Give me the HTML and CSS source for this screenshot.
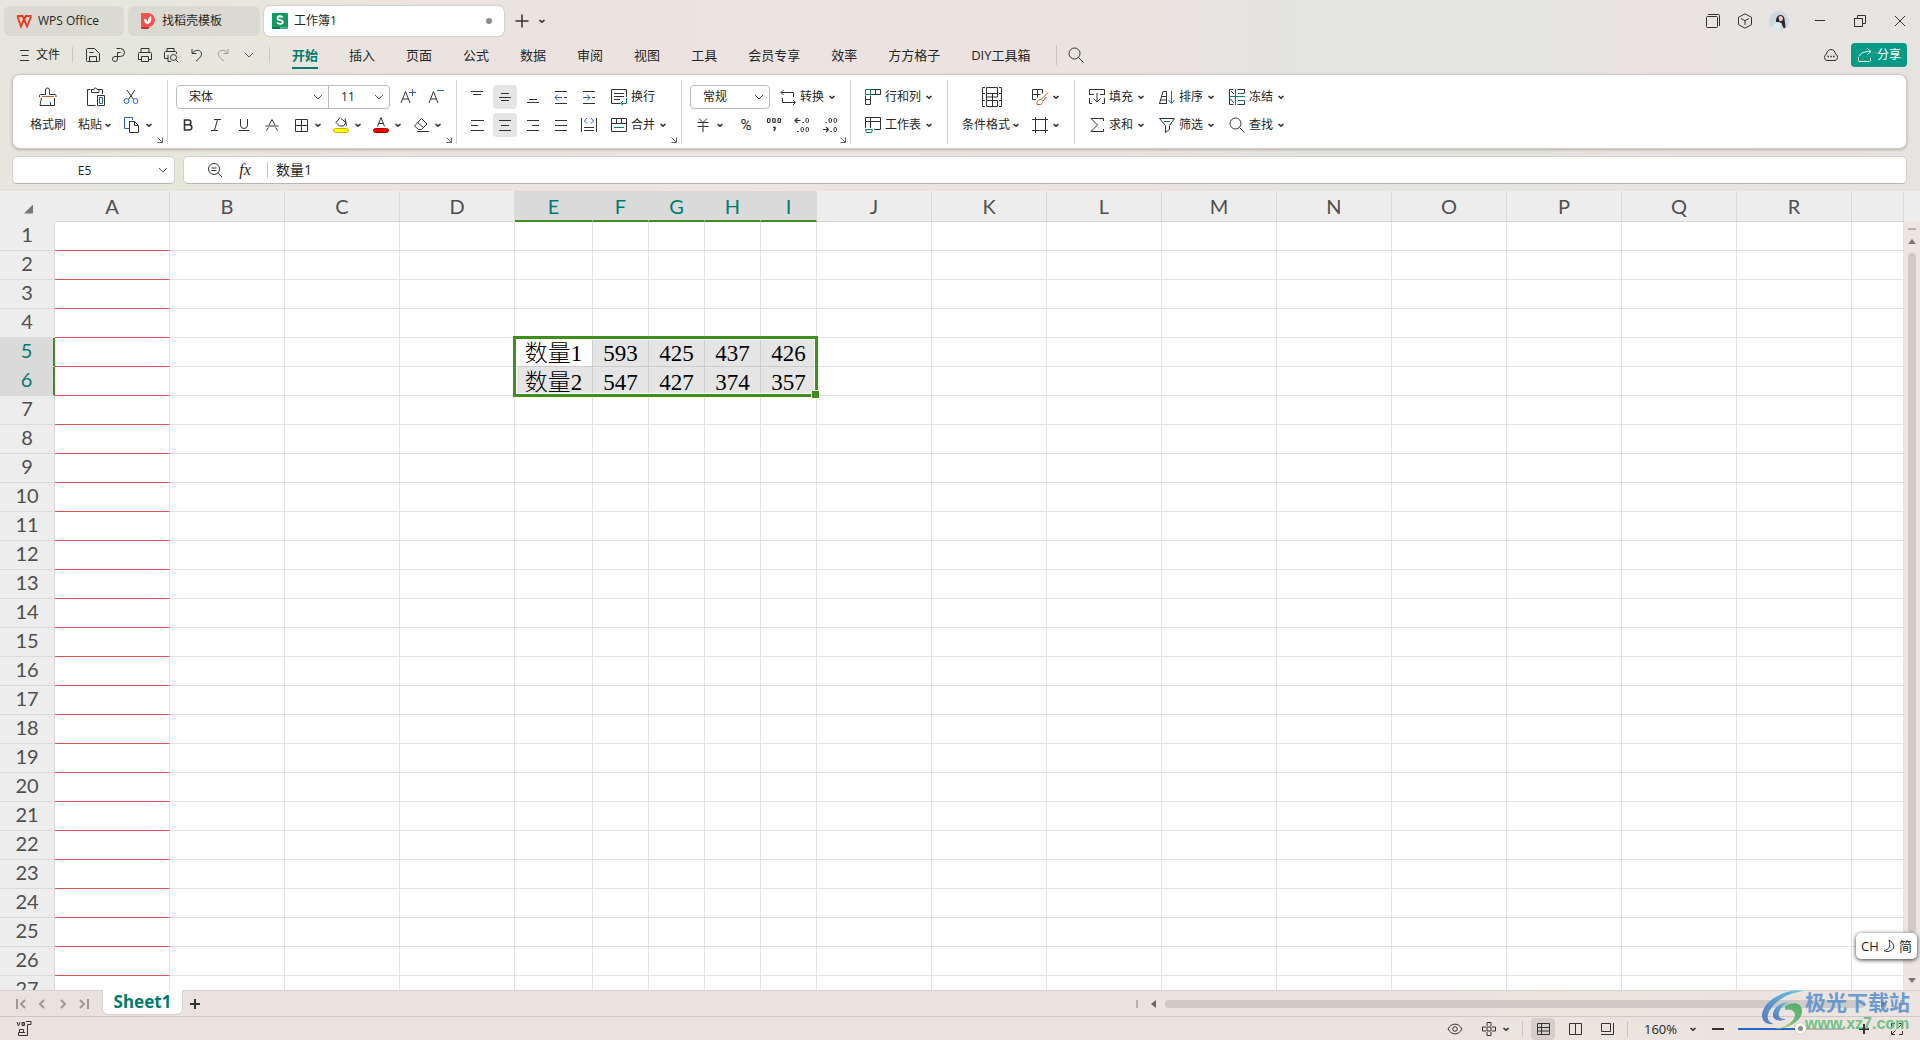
FILE: index.html
```html
<!DOCTYPE html>
<html lang="zh-CN">
<head>
<meta charset="utf-8">
<title>工作簿1 - WPS Office</title>
<link rel="stylesheet" href="styles.css">
</head>
<body>
<svg class="defs" aria-hidden="true">
  <symbol id="chev" viewBox="0 0 10 10"><path d="M2.500 4L5 6.200L7.500 4" fill="none" stroke="#333" stroke-width="1.600"/></symbol>
  <symbol id="chev-thin" viewBox="0 0 10 10"><path d="M1 3l4 4 4-4" fill="none" stroke="#555"/></symbol>
  <symbol id="launch" viewBox="0 0 8 8"><path d="M1.500 1.500l5 5M6.500 1.500v5h-5" fill="none" stroke="#666"/></symbol>
  <symbol id="lens" viewBox="0 0 16 16"><circle cx="6.500" cy="6.500" r="5.500"/><path d="M10.500 10.500l5 5"/></symbol>
</svg>

<header class="titlebar">
  <nav class="doc-tabs">
    <button class="doc-tab home"><svg class="i" viewBox="0 0 16 16"><path d="M1 3h5.500L9 9.500M15.500 3H10L7.500 9.500M1.500 3.500L5 13.500 8 5.500 11 13.500 15 3.500" style="stroke:#f5381f;stroke-width:1.800"/></svg>WPS Office</button>
    <button class="doc-tab docer"><svg class="i" viewBox="0 0 16 16"><path d="M1 0h7a7 7 0 0 1 0 14H1z" fill="#ef5350" stroke="none"/><path d="M1 14h9l-2 2H2.500A1.500 1.500 0 0 1 1 14z" fill="#c62f3a" stroke="none"/><path d="M8 11C4 11 4 7 4.500 5.500 7 6.500 8 8.500 8 11zM8 11c-.5-4 .5-7 3-8 .8 3.500 0 7-3 8z" fill="#fff" stroke="none"/></svg>找稻壳模板</button>
    <button class="doc-tab current"><svg class="i" viewBox="0 0 16 16"><rect width="16" height="16" rx="1" fill="#0f9b63" stroke="none"/><path d="M0 14h16v1a1 1 0 0 1-1 1H1a1 1 0 0 1-1-1z" fill="#087a4b" stroke="none"/><path d="M8 14h8v2H8z" fill="#3bb585" stroke="none"/><path d="M10.800 4.500C9.500 2.800 5.500 2.800 5.500 5.200c0 2.600 5.300 1.300 5.300 3.800 0 2.400-4.300 2.300-5.800.5" style="stroke:#fff;stroke-width:1.900"/></svg>工作簿1<span class="unsaved"></span></button>
    <button class="plain new-tab" aria-label="新建"><svg class="i" viewBox="0 0 16 16"><path d="M8 1.500v13M1.500 8h13" stroke-width="1.500"/></svg></button>
    <button class="plain" aria-label="标签列表"><svg class="c"><use href="#chev"/></svg></button>
  </nav>
  <div class="window-tools">
    <button class="plain" aria-label="窗口"><svg class="i" viewBox="0 0 16 16"><rect x="1.500" y="3.500" width="11" height="11" rx="1"/><path d="M3 1.500h10.500a1 1 0 0 1 1 1V13"/></svg></button>
    <button class="plain" aria-label="应用"><svg class="i" viewBox="0 0 16 16"><path d="M8 .8l6.500 3.500v7.400L8 15.200 1.500 11.700V4.300zM4 5.500l4 2.200 4-2.200M8 7.700V12"/></svg></button>
    <button class="avatar" aria-label="账户"><svg viewBox="0 0 20 20"><circle cx="10" cy="10" r="10" fill="#cbd8de"/><path d="M7 9C8 2 15 3 15.500 8l1 8c-1 2-2 1-2.500 0l-1.500-4L7 11z" fill="#2b2533"/><path d="M9.500 6c2-2 4.500-.5 4.500 1.500S12 11 10.500 10z" fill="#efc9bd"/><path d="M3 18c0-4 3-7 7-7l2 2-1 7c-3 0-6 0-8-2z" fill="#dce9ec"/></svg></button>
    <button class="plain win" aria-label="最小化"><svg class="i" viewBox="0 0 16 16"><path d="M3 7.500h10"/></svg></button>
    <button class="plain win" aria-label="还原"><svg class="i" viewBox="0 0 16 16"><rect x="2.500" y="5.500" width="8" height="8"/><path d="M5.500 5.500v-3h8v8h-3"/></svg></button>
    <button class="plain win" aria-label="关闭"><svg class="i" viewBox="0 0 16 16"><path d="M3 3l10 10M13 3L3 13"/></svg></button>
  </div>
</header>

<div class="menubar">
  <button class="plain file"><svg class="hamb" viewBox="0 0 10 12"><path d="M0 1.500h9M1.500 6.500h7M0 11.500h9" stroke="#333"/></svg>文件</button>
  <span class="vline"></span>
  <div class="quick">
    <button class="plain" aria-label="保存"><svg class="i" viewBox="0 0 16 16"><path d="M1.500 13.500v-11a1 1 0 0 1 1-1h7l5 5v7a1 1 0 0 1-1 1h-11a1 1 0 0 1-1-1zM4.500 14V9.500h7V14M4.500 5.500h4"/></svg></button>
    <button class="plain" aria-label="输出PDF"><svg class="i" viewBox="0 0 16 16"><path d="M5.500 1.500h4a4 4 0 0 1 0 8H4a2.500 2.500 0 1 0 2.500 2.500V5.500h3"/></svg></button>
    <button class="plain" aria-label="打印"><svg class="i" viewBox="0 0 16 16"><path d="M4 5V1.500h8V5M4 12.500H1.500V6.500a1 1 0 0 1 1-1h11a1 1 0 0 1 1 1v6H12M4.500 9.500h7v5h-7z"/></svg></button>
    <button class="plain" aria-label="打印预览"><svg class="i" viewBox="0 0 16 16"><path d="M4 4.500V1.500h7v3M5 11.500H1.500v-6a1 1 0 0 1 1-1h10a1 1 0 0 1 1 1V7M5 8v6.500h3"/><circle cx="10.500" cy="10.500" r="3"/><path d="M12.700 12.700l2.500 2.500"/></svg></button>
    <button class="plain" aria-label="撤销"><svg class="i" viewBox="0 0 16 16"><path d="M3 2v4.500h4.500M3.500 6C6 2 13 2.500 12.500 7.500 12.300 10 9.500 12 7 14"/></svg></button>
    <button class="plain faded" aria-label="恢复"><svg class="i" viewBox="0 0 16 16"><path d="M13 2v4.500H8.500M12.500 6C10 2 3 2.500 3.500 7.500 3.700 10 6.500 12 9 14"/></svg></button>
    <button class="plain" aria-label="更多"><svg class="c"><use href="#chev-thin"/></svg></button>
  </div>
  <span class="vline"></span>
  <nav class="menus">
    <a href="#start" class="on">开始</a><a href="#insert">插入</a><a href="#page">页面</a><a href="#formula">公式</a><a href="#data">数据</a><a href="#review">审阅</a><a href="#view">视图</a><a href="#tools">工具</a><a href="#vip">会员专享</a><a href="#speed">效率</a><a href="#ffcell">方方格子</a><a href="#diy">DIY工具箱</a>
  </nav>
  <span class="vline tall"></span>
  <button class="plain find" aria-label="搜索"><svg class="i"><use href="#lens"/></svg></button>
  <div class="share-area">
    <button class="plain" aria-label="云同步"><svg class="i" viewBox="0 0 16 16"><path d="M4 13.500a3.300 3.300 0 0 1-.5-6.300C4 1 12 1 12.500 7.200A3.300 3.300 0 0 1 12 13.500z"/><path d="M4.500 9.500h1.500M7.300 9.500h1.500M10 9.500h1.500" stroke-width="1.500"/></svg></button>
    <button class="share"><svg class="i" viewBox="0 0 16 16"><path d="M2.500 9C4 5.500 7 4.500 14 4.500M10.500 1.500l3.500 3-3.500 3M1.500 10v3.500a1 1 0 0 0 1 1h10a1 1 0 0 0 1-1V11"/></svg>分享</button>
  </div>
</div>

<section class="ribbon">
  <div class="group clipboard">
    <button class="big brush"><svg class="big-i" viewBox="0 0 20 20"><path d="M7.500 7.500V3a2 2 0 0 1 4 0v4.500H17a1 1 0 0 1 1 1V10M1.500 10V8.500a1 1 0 0 1 1-1h5M3.500 11L2 18.500h14.500V11M12.500 15v3.500"/><path d="M4 9.500h12" class="orange"/></svg><span>格式刷</span></button>
    <button class="big"><svg class="big-i" viewBox="0 0 20 20"><path d="M4.500 2.500h-3v16h8M13 2.500h3.500V7M5.500 5.500v-3H8a1.500 1.500 0 0 1 3 0h2v3z"/><path d="M11.500 8.500h7v10h-7z"/><path d="M13.500 10.500h3v6h-3z" class="blue"/></svg><span>粘贴<svg class="c"><use href="#chev"/></svg></span></button>
    <div class="rows">
      <div class="row"><button class="ic" aria-label="剪切"><svg class="i" viewBox="0 0 16 16"><path d="M4 1l6.500 9.500M12 1L5.500 10.500"/><g class="blue"><circle cx="3.500" cy="12" r="2.500"/><circle cx="12.500" cy="12" r="2.500"/></g></svg></button></div>
      <div class="row"><button class="dd" aria-label="复制"><svg class="i" viewBox="0 0 16 16"><path d="M5 11.500H.5V.5h8V3" class="blue"/><path d="M5.500 4.500h5l4 4v7h-9zM10.500 4.500v4h4"/></svg><svg class="c"><use href="#chev"/></svg></button></div>
    </div>
    <svg class="launch"><use href="#launch"/></svg>
  </div>

  <div class="group">
    <div class="rows">
      <div class="row">
        <div class="combo">
          <label class="pick font"><select aria-label="字体"><option>宋体</option></select><svg class="c"><use href="#chev-thin"/></svg></label>
          <label class="pick size"><select aria-label="字号"><option>11</option></select><svg class="c"><use href="#chev-thin"/></svg></label>
        </div>
        <button class="ic after-combo" aria-label="增大字号"><svg class="i" viewBox="0 0 16 16"><path d="M1 14L5.500 2.500 10 14M2.500 10h6"/><path d="M12.500 0v7M9 3.500h7" class="blue"/></svg></button>
        <button class="ic" aria-label="减小字号"><svg class="i" viewBox="0 0 16 16"><path d="M1 14L5.500 2.500 10 14M2.500 10h6"/><path d="M9 1.500h7" class="blue"/></svg></button>
      </div>
      <div class="row">
        <button class="ic" aria-label="加粗"><svg class="i" viewBox="0 0 16 16"><path d="M4.500 3h4a2.300 2.300 0 0 1 0 4.700h-4zM4.500 7.700h4.700a2.600 2.600 0 0 1 0 5.300H4.500z" stroke-width="1.600"/></svg></button>
        <button class="ic" aria-label="倾斜"><svg class="i" viewBox="0 0 16 16"><path d="M6 2.500h7M3 13.500h7M9.500 2.500l-3 11"/></svg></button>
        <button class="ic" aria-label="下划线"><svg class="i" viewBox="0 0 16 16"><path d="M4.500 2v6a3.500 3.500 0 0 0 7 0V2M3 13.500h10"/></svg></button>
        <button class="ic" aria-label="删除线"><svg class="i" viewBox="0 0 16 16"><path d="M5 8L8 2.500 11 8M4.500 10.500l-2 3M11.500 10.500l2 3M1.500 9h13"/></svg></button>
        <button class="dd" aria-label="边框"><svg class="i" viewBox="0 0 16 16"><path d="M2.500 2.500h12v12h-12zM8.500 2.500v12M2.500 8.500h12"/></svg><svg class="c"><use href="#chev"/></svg></button>
        <button class="dd" aria-label="填充颜色"><svg class="i" viewBox="0 0 16 16"><path d="M7 .5L3 5.500l3.500 3.500h4L13 5.500 8 1.500M12 1.500l1.500 7"/><rect x=".5" y="11.500" width="15" height="4" rx="2" fill="#ff0" style="stroke:#c8b900"/></svg><svg class="c"><use href="#chev"/></svg></button>
        <button class="dd" aria-label="字体颜色"><svg class="i" viewBox="0 0 16 16"><path d="M4.500 9.500L8 .5l3.500 9M5.500 6.500h5"/><rect x=".5" y="11.500" width="15" height="4" rx="2" fill="#f00000" style="stroke:#b80000"/></svg><svg class="c"><use href="#chev"/></svg></button>
        <button class="dd" aria-label="清除"><svg class="i" viewBox="0 0 16 16"><path d="M8.500 1.500L14 7l-5.500 5.500h-3L1.500 9zM4.500 5.500l6 5M4 14.500h12"/></svg><svg class="c"><use href="#chev"/></svg></button>
      </div>
    </div>
    <svg class="launch"><use href="#launch"/></svg>
  </div>

  <div class="group align">
    <div class="rows">
      <div class="row">
        <button class="ic" aria-label="顶端对齐"><svg class="i" viewBox="0 0 16 16"><path d="M2 2.500h12M4 5.500h8"/></svg></button>
        <button class="ic on" aria-label="垂直居中"><svg class="i" viewBox="0 0 16 16"><path d="M4 4.500h8M2 8.500h12M4 11.500h8"/></svg></button>
        <button class="ic" aria-label="底端对齐"><svg class="i" viewBox="0 0 16 16"><path d="M4 10.500h8M2 13.500h12"/></svg></button>
        <button class="ic" aria-label="减少缩进"><svg class="i" viewBox="0 0 16 16"><path d="M2 2.500h12M2 14.500h12M11 8.500h3"/><path d="M9 8.500H2M5 5.500l-3 3 3 3" class="blue"/></svg></button>
        <button class="ic" aria-label="增加缩进"><svg class="i" viewBox="0 0 16 16"><path d="M2 2.500h12M2 14.500h12M11 8.500h3"/><path d="M2 8.500h7M6 5.500l3 3-3 3" class="blue"/></svg></button>
        <button class="tx lead"><svg class="i" viewBox="0 0 16 16"><path d="M9 14.500H.5V.5h15V8M3 4.500h10M3 7.500h10M3 10.500h6"/><path d="M15.500 9v5.500h-5M12 12l-2.500 2.500L12 16" class="green"/></svg>换行</button>
      </div>
      <div class="row">
        <button class="ic" aria-label="左对齐"><svg class="i" viewBox="0 0 16 16"><path d="M2 3.500h13M2 8.500h7M2 13.500h13"/></svg></button>
        <button class="ic on" aria-label="水平居中"><svg class="i" viewBox="0 0 16 16"><path d="M2 3.500h12M4 8.500h8M2 13.500h12"/></svg></button>
        <button class="ic" aria-label="右对齐"><svg class="i" viewBox="0 0 16 16"><path d="M2 3.500h12M7 8.500h7M2 13.500h12"/></svg></button>
        <button class="ic" aria-label="两端对齐"><svg class="i" viewBox="0 0 16 16"><path d="M2 3.500h12M2 8.500h12M2 13.500h12"/></svg></button>
        <button class="ic" aria-label="分散对齐"><svg class="i" viewBox="0 0 16 16"><path d="M.5 1v14M15.500 1v14M3 10.500h10M3 13.500h10"/><path d="M6 1L3.500 4 6 6.500M10 1l2.500 3L10 6.500" class="blue"/></svg></button>
        <button class="tx lead"><svg class="i" viewBox="0 0 16 16"><path d="M.5 1.500h15v13H.5zM.5 6.500h15M5.500 1.500v5M10.500 1.500v5"/><path d="M3 10.500h10" class="green"/></svg>合并<svg class="c"><use href="#chev"/></svg></button>
      </div>
    </div>
    <svg class="launch"><use href="#launch"/></svg>
  </div>

  <div class="group">
    <div class="rows">
      <div class="row">
        <div class="combo"><label class="pick number"><select aria-label="数字格式"><option>常规</option></select><svg class="c"><use href="#chev-thin"/></svg></label></div>
        <button class="tx lead"><svg class="i" viewBox="0 0 16 16"><path d="M2.500 9v4.500H15M13 11l2.500 2.500L13 16M13.500 8V3.500H1M3.500 1L1 3.500 3.500 6"/></svg>转换<svg class="c"><use href="#chev"/></svg></button>
      </div>
      <div class="row">
        <button class="dd" aria-label="货币"><svg class="i" viewBox="0 0 16 16"><path d="M4 1.500l4 4 4-4M2.500 5.500h11M2.500 9.500h11M8 5.500V15"/></svg><svg class="c"><use href="#chev"/></svg></button>
        <button class="ic pct" aria-label="百分比">%</button>
        <button class="ic" aria-label="千位分隔"><svg class="i" viewBox="0 0 16 16"><g stroke-width="1.200"><rect x="1.500" y="1.500" width="2.500" height="4" rx="1"/><rect x="6.700" y="1.500" width="2.500" height="4" rx="1"/><rect x="12" y="1.500" width="2.500" height="4" rx="1"/></g><path d="M7 10.500h2v1.500l-1 2" stroke-width="1.500"/></svg></button>
        <button class="ic" aria-label="增加小数"><svg class="i" viewBox="0 0 16 16"><path d="M6.500 3.500H1M3.500 1L1 3.500 3.500 6M8.500 5.500H10M3 14.500h1.500" stroke-width="1.200"/><rect x="12" y="1.500" width="2.500" height="4" rx="1"/><rect x="7" y="10.500" width="2.500" height="4" rx="1"/><rect x="12" y="10.500" width="2.500" height="4" rx="1"/></svg></button>
        <button class="ic" aria-label="减少小数"><svg class="i" viewBox="0 0 16 16"><path d="M1 12.500h5.500M4 10l2.500 2.500L4 15M8.500 14.500H10M3.500 5.500H5" stroke-width="1.200"/><rect x="12" y="10.500" width="2.500" height="4" rx="1"/><rect x="7" y="1.500" width="2.500" height="4" rx="1"/><rect x="12" y="1.500" width="2.500" height="4" rx="1"/></svg></button>
      </div>
    </div>
    <svg class="launch"><use href="#launch"/></svg>
  </div>

  <div class="group wide">
    <div class="rows">
      <div class="row"><button class="tx"><svg class="i" viewBox="0 0 16 16"><path d="M.5 6.500v9h5v-9M.5 10.500h5M5.500 5.500h10v-5h-10M10.500.5v5"/><path d="M.5.5h5v5h-5z" class="green"/></svg>行和列<svg class="c"><use href="#chev"/></svg></button></div>
      <div class="row"><button class="tx"><svg class="i" viewBox="0 0 16 16"><path d="M.5 11V.5h15v12H9M.5 4.500h15M5.500.5V11"/><path d="M.5 12.500h7l-1 3h-5z" class="green"/></svg>工作表<svg class="c"><use href="#chev"/></svg></button></div>
    </div>
  </div>

  <div class="group wide">
    <button class="big"><svg class="big-i" viewBox="0 0 20 20"><path d="M3 .5H.500v19H3M17 .5h2.500v19H17M.5 6.500H3M.5 13.500H3M17 6.500h2.500M17 13.500h2.500M4.500.5h11v6h-11zM4.500 6.500v7M10.500 6.500v7M4.500 13.500h11v6h-11M4.500 13.500v6M10.500 10H15M4.500 10h6M15.500 6.500v3.500M10.500 13.500v6"/></svg><span>条件格式<svg class="c"><use href="#chev"/></svg></span></button>
    <div class="rows styles">
      <div class="row"><button class="tx" aria-label="单元格样式"><svg class="i" viewBox="0 0 16 16"><path d="M4 10.500H.5V.5h10v4M.5 5.500h8M5.500.5v8"/><path d="M16 3.500L9.500 10M14.500 8L11 12M5 15.500c-.5-2 .5-5 3.500-5s3 4 0 5z" class="orange"/></svg><svg class="c"><use href="#chev"/></svg></button></div>
      <div class="row"><button class="tx" aria-label="单元格"><svg class="i" viewBox="0 0 16 16"><path d="M3.500 0v16M13.500 0v16M0 2.500h16M0 13.500h16"/></svg><svg class="c"><use href="#chev"/></svg></button></div>
    </div>
  </div>

  <div class="group wide last">
    <div class="rows">
      <div class="row edits">
        <button class="tx"><svg class="i" viewBox="0 0 16 16"><path d="M3 14.500H.5V9M.5 6V.5h15V6M15.500 9v5.500H13M.5 5.500H5M11 5.500h4.500M8 4v9M4.500 9.500L8 13l3.500-3.500"/></svg>填充<svg class="c"><use href="#chev"/></svg></button>
        <button class="tx"><svg class="i" viewBox="0 0 16 16"><path d="M.5 14.500L4 2.500h3.500v12M2.500 7.500h5M1.500 11h6M0 14.500h8"/><path d="M12.500 2v12M9.500 11l3 3.500 3-3.500" class="blue"/></svg>排序<svg class="c"><use href="#chev"/></svg></button>
        <button class="tx"><svg class="i" viewBox="0 0 16 16"><path d="M4.500.5h-4v15h4M8.500.5h7v4M8.500 15.500h7v-4M2 2l3 3M1.500 10l3.500 4"/><path d="M6.500 0v16M0 7.500h16M9 4.500h6M9 11.500h6" class="green"/></svg>冻结<svg class="c"><use href="#chev"/></svg></button>
      </div>
      <div class="row edits">
        <button class="tx"><svg class="i" viewBox="0 0 16 16"><path d="M14.500 4V1.500H2L8.500 8 2 14.500h12.500V12"/></svg>求和<svg class="c"><use href="#chev"/></svg></button>
        <button class="tx"><svg class="i" viewBox="0 0 16 16"><path d="M.5 1.500h15l-5 7v4l-4 3v-7z"/><path d="M5 4.500h6" class="green"/></svg>筛选<svg class="c"><use href="#chev"/></svg></button>
        <button class="tx"><svg class="i"><use href="#lens"/></svg>查找<svg class="c"><use href="#chev"/></svg></button>
      </div>
    </div>
  </div>
</section>

<div class="formula-row">
  <div class="name-box"><input aria-label="名称框" value="E5"><svg class="c"><use href="#chev-thin"/></svg></div>
  <div class="formula">
    <button class="plain" aria-label="缩小"><svg class="i" viewBox="0 0 16 16"><circle cx="7" cy="7" r="5.500"/><path d="M11 11l4 4M4.500 6h5M4.500 8.500h5"/></svg></button>
    <button class="plain fx" aria-label="插入函数">fx</button>
    <span class="vline"></span>
    <input aria-label="编辑栏" value="数量1">
  </div>
</div>

<main class="sheet-area">
  <div class="sheet">
    <table>
      <colgroup id="cols"></colgroup>
      <thead><tr id="head"></tr></thead>
      <tbody id="body"></tbody>
    </table>
  </div>
  <div class="vscroll">
    <span class="split"></span><span class="arrow up"></span><span class="thumb"></span><span class="arrow down"></span>
  </div>
  <div class="ime"><span>CH</span><svg viewBox="0 0 12 14"><path d="M6 1c5 3 7 8 1 11-2 1-4 .5-6-.5 5-1 7-4 5-10.500z" fill="none" stroke="#333"/></svg><span>简</span></div>
</main>

<footer>
  <div class="sheetbar">
    <div class="navs">
      <button class="plain" aria-label="首张"><svg viewBox="0 0 10 10"><path d="M1 0v10M9 1L5 5l4 4"/></svg></button>
      <button class="plain" aria-label="上一张"><svg viewBox="0 0 10 10"><path d="M7 1L3 5l4 4"/></svg></button>
      <button class="plain" aria-label="下一张"><svg viewBox="0 0 10 10"><path d="M3 1l4 4-4 4"/></svg></button>
      <button class="plain" aria-label="末张"><svg viewBox="0 0 10 10"><path d="M9 0v10M1 1l4 4-4 4"/></svg></button>
    </div>
    <button class="sheet-tab">Sheet1</button>
    <button class="plain add" aria-label="新建工作表"><svg viewBox="0 0 10 10"><path d="M5 0v10M0 5h10"/></svg></button>
    <div class="hscroll"><span class="split"></span><span class="arrow left"></span><span class="thumb"></span><span class="arrow right"></span><span class="split"></span></div>
  </div>
  <div class="status">
    <button class="plain" aria-label="宏"><svg class="i" viewBox="0 0 16 16"><path d="M1 1l1.500 4L4 1M6 1.500h2.500v3H6zM6 3h2M10 .5h5v3h-3.500V14.500M3.500 8.500h4v3h-4zM11.500 14.500H2.500v-3H9"/></svg></button>
    <div class="status-right">
      <button class="plain" aria-label="护眼"><svg class="i" viewBox="0 0 16 16"><path d="M1 8c3.500-6.500 10.500-6.500 14 0-3.500 6.500-10.500 6.500-14 0z"/><circle cx="8" cy="8" r="2.300"/></svg></button>
      <button class="plain cross" aria-label="阅读模式"><svg class="i" viewBox="0 0 16 16"><path d="M6 5V1.500h4V5M6 11v3.500h4V11M5 6H1.500v4H5M11 6h3.500v4H11M6 6h4v4H6z"/></svg><svg class="c"><use href="#chev"/></svg></button>
      <span class="vline"></span>
      <button class="view on" aria-label="普通视图"><svg class="i" viewBox="0 0 16 16"><path d="M2.500 2.500h12v11h-12zM2.500 6.500h12M6.500 2.500v11M2.500 10h12"/></svg></button>
      <button class="view" aria-label="分页预览"><svg class="i" viewBox="0 0 16 16"><path d="M2.500 2.500h12v11h-12zM8.500 2.500v11"/></svg></button>
      <button class="view" aria-label="页面布局"><svg class="i" viewBox="0 0 16 16"><path d="M2.500 2.500h9v8h-9zM14.500 2v11.500H2"/></svg></button>
      <span class="vline"></span>
      <button class="plain zoom-level">160%<svg class="c"><use href="#chev"/></svg></button>
      <button class="plain step" aria-label="缩小"><svg viewBox="0 0 12 12"><path d="M0 6h12"/></svg></button>
      <input type="range" aria-label="显示比例" min="0" max="100" value="60">
      <button class="plain step" aria-label="放大"><svg viewBox="0 0 12 12"><path d="M1 6h10M6 1v10"/></svg></button>
      <button class="plain full" aria-label="全屏"><svg class="i" viewBox="0 0 16 16"><path d="M6 2.500H2.500V6M10 2.500h3.500V6M2.500 10v3.500H6M13.500 10v3.500H10M9.500 6.500l4-4M6.500 9.500l-4 4"/></svg></button>
    </div>
  </div>
  <div class="brand">
    <svg viewBox="0 0 44 42">
      <defs>
        <linearGradient id="b1" x1="0" y1="1" x2="1" y2="0"><stop offset="0" stop-color="#3f67b5"/><stop offset="1" stop-color="#4fc3ec"/></linearGradient>
        <linearGradient id="b2" x1="0" y1="1" x2="1" y2="0"><stop offset="0" stop-color="#dfe05a"/><stop offset=".5" stop-color="#58b76a"/><stop offset="1" stop-color="#3aa35c"/></linearGradient>
      </defs>
      <path d="M43 1C25-2 3 10 1 24c-.5 7 4 11 12 10-7-2-8-8-4-14C16 9 28 3 43 1z" fill="url(#b1)"/>
      <path d="M24 16c8-5 17-3 17 5 0 10-13 18-27 18 11-2 20-8 20-14 0-4-4-6-10-5z" fill="url(#b2)"/>
      <path d="M29 12c-10 0-18 7-17 14 1 5 8 6 13 3-6 0-8-2-7-6 1-5 5-9 11-11z" fill="url(#b1)"/>
    </svg>
    <div><b>极光下载站</b><i>www.xz7.com</i></div>
  </div>
</footer>
<script src="script.js"></script>
</body>
</html>
```
FILE: styles.css
```css
* { box-sizing: border-box; }
body {
  margin: 0; height: 100vh; display: flex; flex-direction: column; overflow: hidden;
  font: 12px/16px "Open Sans", "Noto Sans CJK SC", sans-serif; color: #262626;
  background: linear-gradient(90deg, #e6e5de 0, #e6e7dc 8%, #ebe3df 22%, #ede3e1 40%, #ebe3e0 58%, #e4e4e1 68%, #e4e4e0 80%, #e9e4e1 84%, #e7e3e0 100%);
}
.defs { position: absolute; width: 0; height: 0; }
button, input, select { font: inherit; color: inherit; }
button { display: flex; align-items: center; justify-content: center; border: 0; padding: 0; background: none; white-space: nowrap; }
svg { flex: none; }
.i { width: 16px; height: 16px; fill: none; stroke: #333; overflow: visible; }
.c { width: 10px; height: 10px; }
.blue { stroke: #2b5fd9; }
.green { stroke: #0b8457; }
.orange { stroke: #c8602c; }
.vline { width: 1px; height: 16px; background: #c9c5c1; flex: none; }

.titlebar { display: flex; justify-content: space-between; align-items: center; height: 36px; padding: 6px 12px 0 4px; flex: none; }
.doc-tabs { display: flex; align-items: center; gap: 4px; }
.doc-tab { height: 30px; border-radius: 6px; background: #dadad2; justify-content: flex-start; gap: 6px; padding: 0 12px; }
.home { width: 120px; }
.docer { width: 132px; }
.current { width: 240px; padding: 0 12px 0 8px; background: #fff; box-shadow: 0 0 2px #a9a49f; }
.unsaved { width: 6px; height: 6px; border-radius: 50%; background: #8c8c8c; margin-left: auto; }
.new-tab { margin: 0 3px 0 6px; }
.window-tools { display: flex; align-items: center; height: 28px; }
.window-tools .plain { width: 32px; }
.window-tools .win { width: 40px; }
.window-tools .win:last-child { width: 16px; margin-left: 12px; }
.avatar { width: 20px; height: 20px; margin: 0 11px 0 8px; }
.avatar svg { width: 20px; height: 20px; }

.menubar { display: flex; align-items: center; height: 38px; flex: none; padding: 0 13px 0 20px; }
.file { gap: 6px; margin-right: 12px; }
.hamb { width: 10px; height: 12px; }
.quick { display: flex; padding: 0 7px; }
.quick .plain { width: 26px; height: 24px; }
.faded { opacity: .4; }
.menus { display: flex; gap: 31px; margin: 0 25px 0 22px; font-size: 13px; line-height: 20px; }
.menus a { color: inherit; text-decoration: none; padding: 4px 0 2px; border-bottom: 2px solid transparent; white-space: nowrap; }
.menus .on { color: #007c6e; font-weight: 700; border-color: #007c6e; }
.tall { height: 20px; }
.find { margin-left: 11px; }
.share-area { display: flex; gap: 12px; margin-left: auto; }
.share { width: 56px; height: 24px; border-radius: 4px; background: #009a86; color: #fff; gap: 4px; }
.share .i { stroke: #fff; }

.ribbon { display: flex; margin: 0 13px 0 12px; height: 75px; padding: 5px 0 4px; flex: none; background: #fff; border: 1px solid #cfcbc8; border-radius: 8px; box-shadow: 0 1px 3px #b5afab; }
.group { position: relative; display: flex; padding: 5px 8px 0; border-right: 1px solid #d4d4d4; }
.clipboard { padding: 5px 12px 0 17px; gap: 6px; }
.brush { margin-right: 6px; }
.align { padding-right: 13px; }
.wide { padding: 5px 13px 0 14px; }
.last { border: 0; }
.rows { display: flex; flex-direction: column; gap: 4px; }
.row { display: flex; gap: 4px; height: 24px; }
.edits { gap: 13px; }
.ic, .view { width: 24px; height: 24px; border-radius: 4px; }
.ic.on { background: #e5e5e5; }
.dd { width: 36px; padding: 0 1px 0 5px; justify-content: flex-start; gap: 4px; }
.pct { font: 15px Roboto, sans-serif; margin-left: 4px; }
.tx { gap: 4px; padding-right: 1px; }
.tx .c { margin: 0 -1px; }
.lead { margin-left: 6px; }
.styles { margin-left: 11px; }
.after-combo { margin-left: 2px; }
.big { flex-direction: column; height: 52px; gap: 10px; padding-top: 2px; justify-content: flex-start; }
.big span { display: flex; align-items: center; }
.big .c { margin-left: 1px; }
.big-i { width: 20px; height: 20px; fill: none; stroke: #333; }
.launch { position: absolute; right: 3px; bottom: 0; width: 8px; height: 8px; }
.combo { display: flex; height: 24px; border: 1px solid #bcbcbc; border-radius: 4px; }
.pick { position: relative; display: flex; align-items: center; }
.pick + .pick { border-left: 1px solid #bcbcbc; }
.pick select { appearance: none; border: 0; background: none; width: 100%; height: 22px; padding: 0 12px; outline: 0; }
.pick .c { position: absolute; right: 5px; pointer-events: none; }
.font { width: 151px; }
.size { width: 61px; }
.number { width: 78px; }

.formula-row { display: flex; gap: 8px; margin: 7px 13px 7px 12px; height: 28px; flex: none; }
.name-box, .formula { display: flex; align-items: center; background: #fff; border: 1px solid #d4d0cd; border-bottom-color: #b5b5b5; border-radius: 5px; }
.name-box { width: 163px; padding-right: 6px; }
.name-box input { flex: 1; min-width: 0; text-align: center; padding: 0 2px 0 0; }
.formula { flex: 1; padding-left: 23px; gap: 12px; }
.formula input { flex: 1; font-size: 14px; padding: 0 0 2px; margin-left: -4px; }
.formula-row input { border: 0; background: none; outline: 0; height: 24px; }
.fx { font: italic 16px "Liberation Serif", serif; width: 20px; }

.sheet-area { flex: 1; min-height: 0; display: flex; position: relative; background: #ededed; }
.sheet { flex: 1; min-width: 0; overflow: hidden; }
table { width: 100%; table-layout: fixed; border-collapse: separate; border-spacing: 0; background: #fff; }
col { width: 115px; }
col.gutter { width: 55px; }
col.mid { width: 78px; }
col.slim { width: 56px; }
col.rest { width: auto; }
th { font: 20px/24px Lato, sans-serif; color: #4f4f4f; background: #ededed; padding: 0; border: 0 solid #d9d9d9; border-width: 0 1px 1px 0; }
thead th { height: 31px; }
thead th:first-child { border-color: #ededed; }
.corner { display: block; width: 9px; height: 9px; margin: 6px 0 0 24px; background: #777; clip-path: polygon(100% 0, 100% 100%, 0 100%); }
tbody th { height: 29px; padding-bottom: 4px; }
td { position: relative; height: 29px; padding: 4px 0 0; border: 0 solid #e3e3e3; border-width: 0 1px 1px 0; text-align: center; font: 300 23px/24px "Liberation Serif", "Noto Sans CJK SC", serif; color: #000; white-space: nowrap; }
td.ruled { border-bottom-color: #e14f5f; }
thead th.sel { background: #dadada; color: #007c6e; border-right-color: #dadada; border-bottom: 2px solid #3f8f1f; }
tbody th.sel { background: #dadada; color: #007c6e; border-bottom-color: #dadada; border-right: 2px solid #3f8f1f; }
td.sel { background: #e5e5e5; border-color: #cdcdcd; }
td.active { background: #fff; }
.selection { position: absolute; z-index: 1; left: -2px; top: -2px; width: 305px; height: 61px; border: 3px solid #3f8f1f; box-shadow: inset 0 0 0 1px #fff; }
.selection::after { content: ""; position: absolute; right: -5px; bottom: -5px; width: 7px; height: 7px; background: #3f8f1f; border: 1px solid #fff; }

.split, .arrow { flex: none; }
.split { background: #b7b2b0; }
.thumb { flex: 1; background: #d0cac7; border-radius: 4px; }
.arrow { border: 4px solid transparent; }
.vscroll { width: 16px; margin-top: 30px; padding: 7px 4px; display: flex; flex-direction: column; background: #ece5e2; }
.vscroll .split { height: 2px; }
.vscroll .thumb { margin: 9px 0 45px; }
.up { border-bottom: 5px solid #777; border-top: 0; margin-top: 9px; }
.down { border-top: 5px solid #777; border-bottom: 0; }
.ime { position: absolute; right: 3px; bottom: 31px; display: flex; align-items: center; justify-content: center; gap: 4px; width: 61px; height: 26px; background: #fff; border-radius: 5px; box-shadow: 0 1px 4px #333; font-size: 13px; }
.ime svg { width: 12px; height: 14px; }

footer { position: relative; flex: none; background: linear-gradient(90deg, #ebe2df 0, #ece3e0 75%, #ece4dd 80%, #ede3e0 100%); }
.sheetbar { display: flex; height: 26px; border-top: 1px solid #d5d1cf; }
.navs { display: flex; align-items: center; padding-left: 10px; width: 102px; }
.navs .plain { width: 21px; height: 24px; }
.navs svg { width: 10px; height: 10px; fill: none; stroke: #9d9895; stroke-width: 2; }
.sheet-tab { width: 81px; height: 25px; margin-top: -1px; background: #fff; border: 1px solid #d8d2cf; border-top: 0; border-radius: 0 0 6px 6px; font: 700 17px/22px "Noto Sans", sans-serif; color: #007c6e; }
.add { width: 24px; }
.add svg { width: 10px; height: 10px; stroke: #333; stroke-width: 2; }
.hscroll { display: flex; align-items: center; margin-left: auto; flex: 0 1 784px; height: 25px; padding-right: 18px; }
.hscroll .split { width: 2px; height: 8px; }
.hscroll .thumb { height: 8px; margin: 0 16px 0 9px; }
.left { border-right: 5px solid #666; border-left: 0; margin-left: 13px; }
.right { border-left: 5px solid #666; border-right: 0; margin-right: 14px; }
.status { display: flex; justify-content: space-between; height: 24px; border-top: 1px solid #cdc8c5; padding: 0 15px 0 16px; }
.status-right { display: flex; align-items: center; gap: 8px; }
.cross { margin: 0 3px 0 10px; gap: 4px; }
.view { height: 22px; }
.view.on { background: #d5cfcc; }
.status-right .zoom-level { font-size: 13px; gap: 11px; margin-left: 8px; }
.step { width: 12px; margin: 0 6px; }
.step svg { width: 12px; height: 12px; stroke: #333; stroke-width: 2; }
.full { margin-left: 5px; }
input[type=range] { appearance: none; width: 106px; height: 12px; margin: 0; background: linear-gradient(90deg, #2468cc 60%, #b9b4b2 60%) center / 100% 2px no-repeat; }
input[type=range]::-webkit-slider-thumb { appearance: none; width: 11px; height: 11px; border: 3px solid #fff; border-radius: 50%; background: #8c8c8c; box-shadow: 0 0 1px #777; }
.brand { position: absolute; right: 10px; bottom: 6px; display: flex; align-items: center; opacity: .85; pointer-events: none; }
.brand svg { width: 44px; height: 42px; }
.brand b, .brand i { display: block; white-space: nowrap; }
.brand b { font: 700 21px/26px "Noto Sans CJK SC", sans-serif; color: #5590cd; }
.brand i { font: 700 16px/20px "Liberation Sans", sans-serif; color: #5bbd78; }
```
FILE: script.js
```js
const letters = "ABCDEFGHIJKLMNOPQR".split("").concat("");
const values = {
  5: { E: "数量1", F: 593, G: 425, H: 437, I: 426 },
  6: { E: "数量2", F: 547, G: 427, H: 374, I: 357 }
};
const selectedCols = "EFGHI";
const colClass = c => c === "" ? "rest" : c === "E" ? "mid" : "FGHI".includes(c) ? "slim" : "";

document.getElementById("cols").innerHTML =
  '<col class="gutter">' + letters.map(c => `<col class="${colClass(c)}">`).join("");

document.getElementById("head").innerHTML =
  '<th><span class="corner"></span></th>' +
  letters.map(c => `<th class="${c && selectedCols.includes(c) ? "sel" : ""}">${c}</th>`).join("");

let rows = "";
for (let r = 1; r <= 27; r++) {
  const rowValues = values[r];
  rows += `<tr><th class="${rowValues ? "sel" : ""}">${r}</th>`;
  for (const c of letters) {
    const value = rowValues && c ? rowValues[c] : undefined;
    const active = r === 5 && c === "E";
    const cls = c === "A" ? "ruled" : active ? "sel active" : value !== undefined ? "sel" : "";
    rows += `<td class="${cls}">${value === undefined ? "" : value}${active ? '<span class="selection"></span>' : ""}</td>`;
  }
  rows += "</tr>";
}
document.getElementById("body").innerHTML = rows;
```
